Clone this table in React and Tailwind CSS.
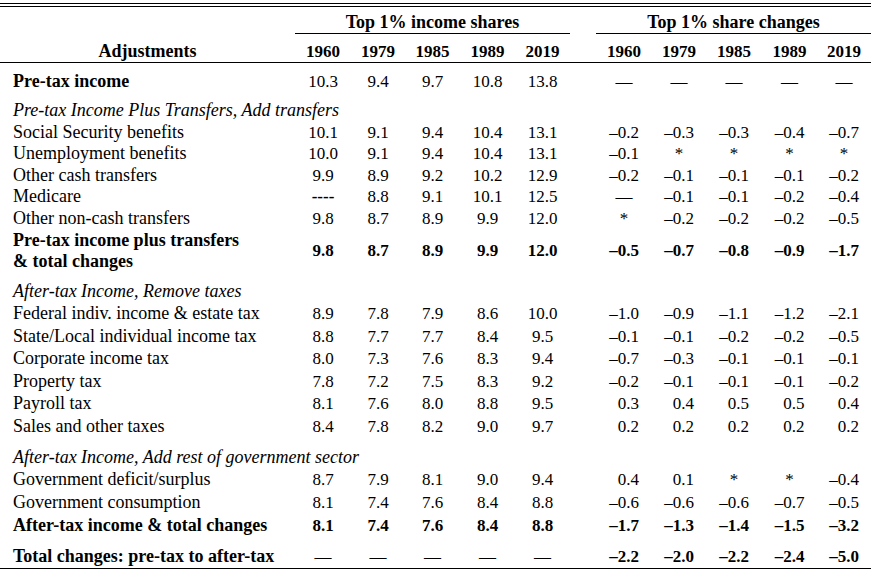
import React from "react";

const GRID =
  "grid grid-cols-[295px_56px_54px_55px_55px_55px_26px_56px_54px_56px_55px_54px] items-center";

const rows = [
  { label: "Pre-tax income", bold: true, valRegular: true, h: "h-[36px]", a: ["10.3", "9.4", "9.7", "10.8", "13.8"], b: ["—", "—", "—", "—", "—"] },
  { section: "Pre-tax Income Plus Transfers, Add transfers", h: "h-[22px]" },
  { label: "Social Security benefits", h: "h-[22px]", a: ["10.1", "9.1", "9.4", "10.4", "13.1"], b: ["–0.2", "–0.3", "–0.3", "–0.4", "–0.7"] },
  { label: "Unemployment benefits", h: "h-[21px]", a: ["10.0", "9.1", "9.4", "10.4", "13.1"], b: ["–0.1", "*", "*", "*", "*"] },
  { label: "Other cash transfers", h: "h-[22px]", a: ["9.9", "8.9", "9.2", "10.2", "12.9"], b: ["–0.2", "–0.1", "–0.1", "–0.1", "–0.2"] },
  { label: "Medicare", h: "h-[21px]", a: ["----", "8.8", "9.1", "10.1", "12.5"], b: ["—", "–0.1", "–0.1", "–0.2", "–0.4"] },
  { label: "Other non-cash transfers", h: "h-[22px]", a: ["9.8", "8.7", "8.9", "9.9", "12.0"], b: ["*", "–0.2", "–0.2", "–0.2", "–0.5"] },
  { label: ["Pre-tax income plus transfers", "& total changes"], bold: true, h: "h-[43px]", a: ["9.8", "8.7", "8.9", "9.9", "12.0"], b: ["–0.5", "–0.7", "–0.8", "–0.9", "–1.7"] },
  { spacer: "h-[8px]" },
  { section: "After-tax Income, Remove taxes", h: "h-[22px]" },
  { label: "Federal indiv. income & estate tax", h: "h-[23px]", a: ["8.9", "7.8", "7.9", "8.6", "10.0"], b: ["–1.0", "–0.9", "–1.1", "–1.2", "–2.1"] },
  { label: "State/Local individual income tax", h: "h-[22px]", a: ["8.8", "7.7", "7.7", "8.4", "9.5"], b: ["–0.1", "–0.1", "–0.2", "–0.2", "–0.5"] },
  { label: "Corporate income tax", h: "h-[23px]", a: ["8.0", "7.3", "7.6", "8.3", "9.4"], b: ["–0.7", "–0.3", "–0.1", "–0.1", "–0.1"] },
  { label: "Property tax", h: "h-[22px]", a: ["7.8", "7.2", "7.5", "8.3", "9.2"], b: ["–0.2", "–0.1", "–0.1", "–0.1", "–0.2"] },
  { label: "Payroll tax", h: "h-[23px]", a: ["8.1", "7.6", "8.0", "8.8", "9.5"], b: ["0.3", "0.4", "0.5", "0.5", "0.4"] },
  { label: "Sales and other taxes", h: "h-[23px]", a: ["8.4", "7.8", "8.2", "9.0", "9.7"], b: ["0.2", "0.2", "0.2", "0.2", "0.2"] },
  { spacer: "h-[8px]" },
  { section: "After-tax Income, Add rest of government sector", h: "h-[22px]" },
  { label: "Government deficit/surplus", h: "h-[23px]", a: ["8.7", "7.9", "8.1", "9.0", "9.4"], b: ["0.4", "0.1", "*", "*", "–0.4"] },
  { label: "Government consumption", h: "h-[22px]", a: ["8.1", "7.4", "7.6", "8.4", "8.8"], b: ["–0.6", "–0.6", "–0.6", "–0.7", "–0.5"] },
  { label: "After-tax income & total changes", bold: true, h: "h-[24px]", a: ["8.1", "7.4", "7.6", "8.4", "8.8"], b: ["–1.7", "–1.3", "–1.4", "–1.5", "–3.2"] },
  { spacer: "h-[8px]" },
  { label: "Total changes: pre-tax to after-tax", bold: true, h: "h-[23px]", a: ["—", "—", "—", "—", "—"], b: ["–2.2", "–2.0", "–2.2", "–2.4", "–5.0"], dashRegular: true },
];

function Val({ v, right, dashRegular }) {
  const isNum = /\d/.test(v);
  if (v === "----") {
    return <span className="font-bold">----</span>;
  }
  if (!isNum) {
    return <span className={dashRegular ? "font-normal" : ""}>{v}</span>;
  }
  if (right) {
    return <span className="inline-block w-[30px] text-right">{v}</span>;
  }
  return <span>{v}</span>;
}

export default function App() {
  return (
    <div
      className="w-[876px] h-[577px] bg-white text-black overflow-hidden"
      style={{ fontFamily: '"Liberation Serif", "Times New Roman", serif' }}
    >
      <div className="w-[871px]">
        <div className="h-[3px]" />
        <div className="h-px bg-black" />
        <div className="h-[2px]" />
        <div className="h-px bg-black" />

        <div className={GRID + " h-[26px] items-end text-[18px] font-bold leading-[21px]"}>
          <div />
          <div className="col-span-5 text-center">Top 1% income shares</div>
          <div />
          <div className="col-span-5 text-center">Top 1% share changes</div>
        </div>
        <div className={GRID + " h-px"}>
          <div />
          <div className="col-span-5 h-px bg-black" />
          <div />
          <div className="col-span-5 h-px bg-black" />
        </div>

        <div className={GRID + " h-[28px] items-end text-[17px] font-bold leading-[21px]"}>
          <div className="text-center text-[18px]">Adjustments</div>
          {["1960", "1979", "1985", "1989", "2019"].map((y) => (
            <div key={"a" + y} className="text-center">{y}</div>
          ))}
          <div />
          {["1960", "1979", "1985", "1989", "2019"].map((y) => (
            <div key={"b" + y} className="text-center">{y}</div>
          ))}
        </div>
        <div className="h-px bg-black" />

        {rows.map((r, i) => {
          if (r.spacer) return <div key={i} className={r.spacer} />;
          if (r.section)
            return (
              <div key={i} className={r.h + " flex items-center pl-[13px] text-[18px] italic leading-[21px]"}>
                {r.section}
              </div>
            );
          const valWeight = r.bold && !r.valRegular ? " font-bold" : " font-normal";
          return (
            <div key={i} className={GRID + " " + r.h + " leading-[21px]"}>
              <div className={"pl-[13px] text-[18px]" + (r.bold ? " font-bold" : "")}>
                {Array.isArray(r.label) ? r.label.map((l) => <div key={l}>{l}</div>) : r.label}
              </div>
              {r.a.map((v, j) => (
                <div key={"a" + j} className={"text-center text-[17px]" + valWeight}>
                  <Val v={v} dashRegular={r.dashRegular} />
                </div>
              ))}
              <div />
              {r.b.map((v, j) => (
                <div key={"b" + j} className={"text-center text-[17px]" + valWeight}>
                  <Val v={v} right />
                </div>
              ))}
            </div>
          );
        })}
        <div className="h-px bg-black" />
      </div>
    </div>
  );
}
